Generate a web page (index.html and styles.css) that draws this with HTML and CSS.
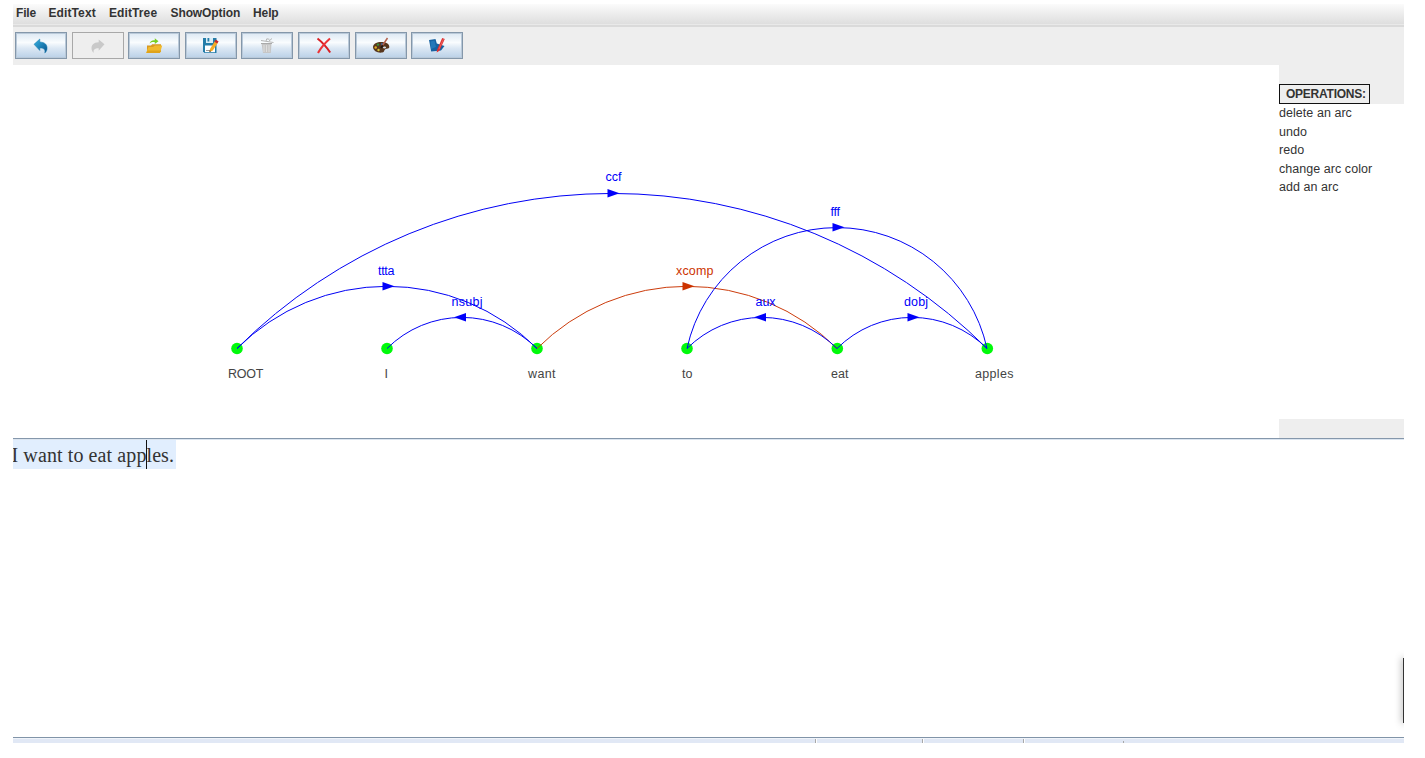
FILE: index.html
```html
<!DOCTYPE html>
<html lang="en">
<head>
<meta charset="utf-8">
<title>Dependency Tree Editor</title>
<link rel="stylesheet" href="styles.css">
</head>
<body>
<div class="app">
  <nav class="menubar">
    <span class="menu-file">File</span><span class="menu-text">EditText</span><span class="menu-tree">EditTree</span><span class="menu-show">ShowOption</span><span class="menu-help">Help</span>
  </nav>
  <div class="toolbar">
    <button class="tool" aria-label="Undo"><svg width="16" height="16" viewBox="0 0 16 16"><defs><linearGradient id="u" x2="1" y2="1"><stop stop-color="#38b4e4"/><stop offset="1" stop-color="#07528c"/></linearGradient></defs><path d="M1 6.300 6.800 1v3c5 .2 7.800 2.600 7.200 7.200-.2 1.500-1 2.900-2.200 3.800.7-3.200-.6-5-5-5v2.500z" fill="url(#u)" stroke="#1479ac" stroke-width=".5"/></svg></button>
    <button class="tool tool-off" aria-label="Redo"><svg width="16" height="16" viewBox="0 0 16 16"><path d="M14.500 6.300 8.700 1.500v2.700C3.600 4.400 1 7 1.600 11.200c.2 1.500 1 2.800 2.200 3.600-.7-3 .6-4.600 4.900-4.600v2.500z" fill="#c9c9c9"/></svg></button>
    <button class="tool" aria-label="Open"><svg width="18" height="16" viewBox="0 0 18 16"><path d="M2 14V7.500h4l1.200-1.300H16V14z" fill="#d99920"/><path d="M1 15 3.500 9H8l2-1.500h7.200L15 15z" fill="#f0b92c"/><path d="M1.500 15H15l.7-2.500H2.500z" fill="#dfa31b"/><path d="M4.500 5.500C5.500 2.800 7.500 2 9.800 2.300V.2L13.500 3.300 9.800 6V4.200C7.800 3.900 6.200 4.300 4.500 5.500z" fill="#79cf21"/></svg></button>
    <button class="tool" aria-label="Save"><svg width="17" height="17" viewBox="0 0 17 17"><path d="M1 1h13.500v15H2.500L1 14.500z" fill="#257da9"/><path d="M4 1h7v5H4z" fill="#d9edf6"/><path d="M5.500 1h1.800v3.500H5.500z" fill="#257da9"/><path d="M3 8.500h10v6.700H3z" fill="#fff"/><path d="M4 13.500h4" stroke="#999"/><path d="m8 12 5-8 2.800 1.800-5 7.700L7.500 15z" fill="#f5ab26"/><path d="m12.400 4.800 1.400-2.200 2.800 1.800-1.400 2.200z" fill="#c92a29"/><path d="m7.400 15 .3-1.700 1.500.9z" fill="#333"/></svg></button>
    <button class="tool" aria-label="Trash"><svg width="16" height="17" viewBox="0 0 16 17"><path d="m2 3.500 12.500 2M7 4l.8-2.200 2.700.5M10 4l3-2.500" stroke="#b5b5b5" fill="none"/><path d="M2.500 6.500h10L11.800 16H4z" fill="#c6c6c6"/><path d="M5 8v7M7.500 8v7M10 8v7" stroke="#e4e4e4" stroke-width=".8"/><path d="M2 6.500h11" stroke="#aaa"/></svg></button>
    <button class="tool" aria-label="Delete"><svg width="16" height="17" viewBox="0 0 16 17"><path d="M1.500 1.500C6 5 10.500 10 14.200 15.500" stroke="#d91f24" stroke-width="2" fill="none"/><path d="M14 1.500C9.500 5.500 5 10.500 2 16" stroke="#ec3538" stroke-width="2.100" fill="none"/></svg></button>
    <button class="tool" aria-label="Arc color"><svg width="18" height="17" viewBox="0 0 18 17"><path d="M1 10C1 6.500 6 4.500 10.500 5c4 .3 7 2 6.800 5-.1 2-2.800 1.500-4 2.200-1.400.9-.6 2.800-3 3.300C6 16.300 1 14 1 10z" fill="#57361d"/><ellipse cx="12.500" cy="10.500" rx="1.600" ry="1" fill="#d7dfe8"/><circle cx="3.700" cy="10.500" r="1.200" fill="#e5ac22"/><circle cx="6" cy="7.600" r="1.200" fill="#38943a"/><circle cx="6.500" cy="13" r="1.200" fill="#d5c43a"/><circle cx="10" cy="7.200" r="1.100" fill="#3d66a0"/><path d="m9.500 10 6-9" stroke="#b4614c" stroke-width="1.500"/><path d="m9 11 1.800-2.800" stroke="#211812" stroke-width="2"/></svg></button>
    <button class="tool" aria-label="Add arc"><svg width="18" height="17" viewBox="0 0 18 17"><path d="m1 3 6.500-1 1.300 4.500 7.700 2.500-3.500 4.500-9.800 1z" fill="#1762a2"/><path d="m2.500 4.500 4-1 1.500 6.500-5 2z" fill="#2478b9"/><path d="m9 13 5.200-12 2.600 1.100-5.400 11.700L8.700 15.500z" fill="#dd3032"/><path d="m11 12 4.500-10" stroke="#f4746d" stroke-width=".7"/></svg></button>
  </div>
  <main class="workspace">
    <svg class="canvas" width="1266" height="373" viewBox="13 65 1266 373">
      <g class="nodes">
        <circle cx="237" cy="348.500" r="5.800"/><circle cx="387" cy="348.500" r="5.800"/><circle cx="537" cy="348.500" r="5.800"/><circle cx="687" cy="348.500" r="5.800"/><circle cx="837.300" cy="348.500" r="5.800"/><circle cx="987.300" cy="348.500" r="5.800"/>
      </g>
      <g class="arcs">
        <path d="M237 348.500A531 531 0 0 1 987 348.500"/>
        <path d="M237 348.500A212 212 0 0 1 537 348.500"/>
        <path d="M387 348.500A106 106 0 0 1 537 348.500"/>
        <path class="hot" d="M537 348.500A212 212 0 0 1 837 348.500"/>
        <path d="M687 348.500A106 106 0 0 1 837 348.500"/>
        <path d="M837 348.500A106 106 0 0 1 987 348.500"/>
        <path d="M687 348.500A153.500 153.500 0 0 1 987 348.500"/>
      </g>
      <g class="heads">
        <path d="M607.500 189v8.500l12-4.200z"/><path d="M382.500 282v8.500l12-4.200z"/><path d="M466 313v8.500l-12-4.200z"/><path class="hot" d="M682.500 282v8.500l12-4.200z"/><path d="M766 313v8.500l-12-4.200z"/><path d="M907.500 313v8.500l12-4.200z"/><path d="M832.500 223v8.500l12-4.200z"/>
      </g>
      <g class="labels">
        <text x="605.500" y="181" textLength="16">ccf</text><text x="378" y="275" textLength="16.500">ttta</text><text x="451.500" y="306" textLength="31">nsubj</text><text class="hot" x="676" y="275" textLength="37.500">xcomp</text><text class="tight" x="830.500" y="216">fff</text><text x="755.500" y="306" textLength="20">aux</text><text x="904" y="306" textLength="24">dobj</text>
      </g>
      <g class="words">
        <text x="228" y="378" textLength="35.500">ROOT</text><text x="384.500" y="378">I</text><text x="528" y="378" textLength="27.500">want</text><text x="682" y="378" textLength="10.500">to</text><text x="831" y="378" textLength="17.500">eat</text><text x="975" y="378" textLength="38.500">apples</text>
      </g>
    </svg>
    <aside class="operations">
      <div class="op-head"><h2>OPERATIONS:</h2></div>
      <ul class="op-list"><li>delete an arc</li><li>undo</li><li>redo</li><li>change arc color</li><li>add an arc</li></ul>
      <div class="op-foot"></div>
    </aside>
  </main>
  <section class="editor"><p class="sentence">I want to eat apples.<i class="caret"></i></p><i class="edge-shadow"></i></section>
  <footer class="status"><i class="cell-a"></i><i class="cell-b"></i><i class="cell-c"></i><i class="cell-d"></i></footer>
</div>
</body>
</html>
```
FILE: styles.css
```css
* { box-sizing: border-box; }
body { margin: 0; background: #fff; color: #333; font: 12px "Liberation Sans", Arial, sans-serif; overflow: hidden; }
.app { width: 1391px; margin: 4px 0 0 13px; }
.menubar { display: flex; height: 23px; padding-left: 3px; line-height: 18px; font-weight: bold; background: linear-gradient(#fbfbfb, #dedede 20px); border-bottom: 2px solid #dadada; box-shadow: inset 0 -1px #e9e9e9; white-space: nowrap; }
.menubar span { flex: none; }
.menu-file { width: 32.500px; letter-spacing: -.2px; }
.menu-text { width: 60.500px; letter-spacing: .1px; }
.menu-tree { width: 61.500px; letter-spacing: .1px; }
.menu-show { width: 82.500px; letter-spacing: -.1px; }
.menu-help { letter-spacing: -.1px; }
.toolbar { display: flex; gap: 4.600px; height: 38px; padding: 5px 2px; background: #eee; }
.tool { display: flex; align-items: center; justify-content: center; width: 52px; height: 27px; padding: 0; border: 1px solid #8497aa; box-shadow: inset 0 0 0 1px #b9c9d9; background: linear-gradient(#dce8f3, #f9fcfe 38%, #dce8f4 60%, #b9d0e7); }
.tool svg { display: block; }
.tool-off { border-color: #a8a8a8; background: #eee; box-shadow: none; }
.workspace { display: flex; height: 374px; border-bottom: 1px solid #8597ab; }
.canvas { flex: none; display: block; }
.nodes { fill: #00fa0a; }
.arcs { fill: none; stroke: #0000f5; stroke-width: 1; }
.arcs .hot { stroke: #cc3c0c; }
.heads, .labels { fill: #0000fa; }
.heads .hot, .labels .hot { fill: #cc3300; }
.labels, .words { font-size: 12.500px; }
.labels .tight { letter-spacing: -.2px; }
.words { fill: #444; }
.operations { display: flex; flex-direction: column; width: 125px; }
.op-head { height: 39px; padding-top: 19px; background: #eee; }
.op-head h2 { width: 91px; height: 20px; margin: 0; padding-left: 6px; border: 1px solid #111; font-size: 12px; line-height: 18px; letter-spacing: -.240px; white-space: nowrap; }
.op-list { flex: 1; margin: 0; padding: 0; list-style: none; font-size: 12.500px; line-height: 18.500px; letter-spacing: .050px; }
.op-foot { height: 19px; background: #eee; }
.editor { position: relative; height: 298px; border-top: 1px solid #dbe5f0; overflow: hidden; }
.sentence { position: relative; width: 163px; height: 29px; margin: 0; background: #e1eefe; font: 20px/30px "Liberation Serif", "Times New Roman", serif; text-indent: -1.500px; letter-spacing: .100px; white-space: nowrap; }
.caret { position: absolute; left: 133px; top: 0; width: 1px; height: 29px; background: #111; }
.edge-shadow { position: absolute; right: -1px; top: 218px; width: 2px; height: 65px; background: #333; box-shadow: 0 0 7px #555; }
.status { display: flex; height: 6px; border-top: 1px solid #8194a8; background: #e1e8f5; box-shadow: inset 0 1px #f0f4fa; }
.status i { height: 4px; margin-top: 1px; border-right: 1px solid #a8a8a8; box-shadow: 1px 0 #fff; }
.cell-a { width: 803px; }
.cell-b { width: 107px; }
.cell-c { width: 101px; }
.status .cell-d { width: 100px; height: 2px; margin-top: 3px; box-shadow: none; }
```
